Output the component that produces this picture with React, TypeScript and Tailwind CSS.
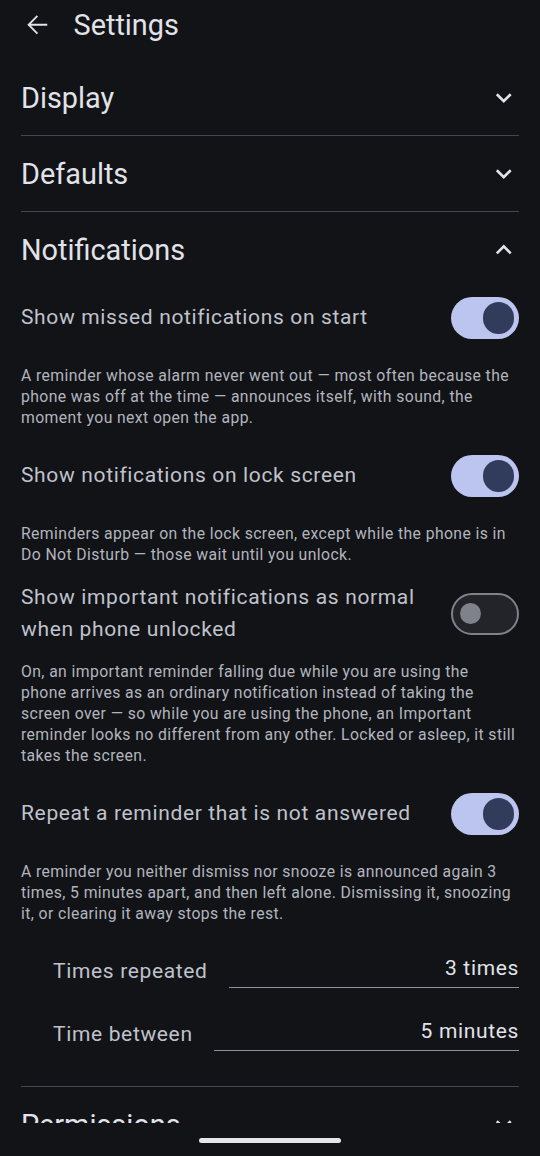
import React from "react";

const FONT = { fontFamily: 'Roboto, "Noto Sans", "Liberation Sans", sans-serif' };

function Chevron({ up }: { up?: boolean }) {
  return (
    <svg width="31.5" height="31.5" viewBox="0 0 24 24" fill="#e2e2e9" className="shrink-0">
      {up ? (
        <path d="M7.41 15.41 12 10.83l4.59 4.58L18 14l-6-6-6 6z" />
      ) : (
        <path d="M16.59 8.59 12 13.17 7.41 8.59 6 10l6 6 6-6z" />
      )}
    </svg>
  );
}

function Switch({ on }: { on: boolean }) {
  if (on) {
    return (
      <div className="w-[68px] h-[42px] shrink-0 rounded-full bg-[#bcc5ef] flex items-center justify-end pr-[5px]">
        <div className="w-[31.5px] h-[31.5px] rounded-full bg-[#313c5c]" />
      </div>
    );
  }
  return (
    <div className="w-[68px] h-[42px] shrink-0 rounded-full bg-[#22242a] border-[2.6px] border-[#7f828b] flex items-center pl-[7px]">
      <div className="w-[21px] h-[21px] rounded-full bg-[#7f828b]" />
    </div>
  );
}

function SectionHeader({ title, open }: { title: string; open?: boolean }) {
  return (
    <div className="h-[75px] flex items-center justify-between">
      <span className="text-[28.875px] leading-[36px] text-[#e2e2e9]">{title}</span>
      <Chevron up={open} />
    </div>
  );
}

function Divider() {
  return <div className="h-px bg-[#44464d]" />;
}

function Lines({ lines }: { lines: string[] }) {
  return (
    <>
      {lines.map((l, i) => (
        <React.Fragment key={i}>
          {l}
          {i < lines.length - 1 && <br />}
        </React.Fragment>
      ))}
    </>
  );
}

function ToggleItem({ label, desc, on }: { label: string[]; desc: string[]; on: boolean }) {
  return (
    <div className="flex flex-col">
      <div className="min-h-[62px] flex items-center justify-between gap-[20px]">
        <span className="text-[21px] leading-[31.5px] tracking-[0.65px] text-[#c0c2cc] whitespace-nowrap">
          <Lines lines={label} />
        </span>
        <Switch on={on} />
      </div>
      <p className="mt-[16px] text-[15.75px] leading-[21px] tracking-[0.4px] text-[#b3b5be] whitespace-nowrap">
        <Lines lines={desc} />
      </p>
    </div>
  );
}

function Field({ label, value }: { label: string; value: string }) {
  return (
    <div className="flex items-center gap-[21px] pl-[32px]">
      <span className="text-[21px] leading-[28px] tracking-[0.65px] text-[#c0c2cc] whitespace-nowrap">{label}</span>
      <div className="flex-1 border-b border-[#8e9099] pb-[5px] text-right">
        <span className="text-[21px] leading-[28px] tracking-[0.65px] text-[#e2e2e9]">{value}</span>
      </div>
    </div>
  );
}

export default function App() {
  return (
    <div className="w-[540px] h-[1156px] bg-[#111317] flex flex-col overflow-hidden" style={FONT}>
      <div className="flex-1 overflow-hidden min-h-0">
        <div className="h-[49px] flex items-center px-[21px] gap-[21px]">
          <svg width="31.5" height="31.5" viewBox="0 0 24 24" fill="#e2e2e9" className="shrink-0">
            <path d="M20 11.2H7.6l5.4-5.4L12 4.8 4.8 12l7.2 7.2 1-1-5.4-5.4H20z" />
          </svg>
          <span className="text-[28.875px] leading-[36px] text-[#e2e2e9]">Settings</span>
        </div>
        <div className="px-[21px] mt-[11px]">
          <SectionHeader title="Display" />
          <Divider />
          <SectionHeader title="Defaults" />
          <Divider />
          <SectionHeader title="Notifications" open />
          <div className="flex flex-col gap-[17px]">
            <ToggleItem
              label={["Show missed notifications on start"]}
              on
              desc={[
                "A reminder whose alarm never went out — most often because the",
                "phone was off at the time — announces itself, with sound, the",
                "moment you next open the app.",
              ]}
            />
            <ToggleItem
              label={["Show notifications on lock screen"]}
              on
              desc={[
                "Reminders appear on the lock screen, except while the phone is in",
                "Do Not Disturb — those wait until you unlock.",
              ]}
            />
            <ToggleItem
              label={["Show important notifications as normal", "when phone unlocked"]}
              on={false}
              desc={[
                "On, an important reminder falling due while you are using the",
                "phone arrives as an ordinary notification instead of taking the",
                "screen over — so while you are using the phone, an Important",
                "reminder looks no different from any other. Locked or asleep, it still",
                "takes the screen.",
              ]}
            />
            <ToggleItem
              label={["Repeat a reminder that is not answered"]}
              on
              desc={[
                "A reminder you neither dismiss nor snooze is announced again 3",
                "times, 5 minutes apart, and then left alone. Dismissing it, snoozing",
                "it, or clearing it away stops the rest.",
              ]}
            />
          </div>
          <div className="mt-[30px] flex flex-col gap-[29px]">
            <Field label="Times repeated" value="3 times" />
            <Field label="Time between" value="5 minutes" />
          </div>
          <div className="mt-[35px]">
            <Divider />
            <SectionHeader title="Permissions" />
          </div>
        </div>
      </div>
      <div className="h-[33px] shrink-0 flex justify-center pt-[15px]">
        <div className="w-[142px] h-[5px] rounded-full bg-[#e6e6e8]" />
      </div>
    </div>
  );
}
